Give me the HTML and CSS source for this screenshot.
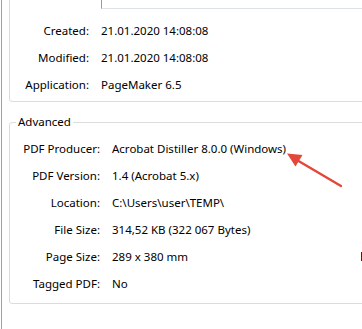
FILE: index.html
```html
<!DOCTYPE html>
<html lang="en">
<head>
<meta charset="utf-8">
<title>Document Properties</title>
<link rel="stylesheet" href="styles.css">
</head>
<body>
<div class="window">
  <div class="panel">
    <section class="group group-top">
      <div class="field-input"></div>
      <div class="props props-top">
        <span class="label">Created:</span><span class="value">21.01.2020 14:08:08</span>
        <span class="label">Modified:</span><span class="value">21.01.2020 14:08:08</span>
        <span class="label">Application:</span><span class="value">PageMaker 6.5</span>
      </div>
    </section>
    <fieldset class="group group-adv">
      <legend class="legend">Advanced</legend>
      <div class="props props-adv">
        <span class="label">PDF Producer:</span><span class="value">Acrobat Distiller 8.0.0 (Windows)</span>
        <span class="label">PDF Version:</span><span class="value">1.4 (Acrobat 5.x)</span>
        <span class="label">Location:</span><span class="value">C:\Users\user\TEMP\</span>
        <span class="label">File Size:</span><span class="value">314,52 KB (322 067 Bytes)</span>
        <span class="label">Page Size:</span><span class="value">289 x 380 mm</span>
        <span class="label">Tagged PDF:</span><span class="value">No</span>
      </div>
    </fieldset>
  </div>
  <span class="edge-mark"></span>
  <svg class="arrow" width="362" height="329" viewBox="0 0 362 329">
    <line x1="341" y1="186" x2="296" y2="159.5" stroke="#e5463a" stroke-width="2.4" stroke-linecap="round"/>
    <polygon points="287,153.5 302.5,155 295.5,166.5" fill="#e5463a"/>
  </svg>
</div>
</body>
</html>
```

FILE: styles.css
```css
html, body {
  margin: 0;
  padding: 0;
  background: #ffffff;
}

body {
  width: 362px;
  height: 329px;
  overflow: hidden;
  font-family: "Noto Sans", "Open Sans", sans-serif;
  font-size: 11.5px;
  color: #000000;
}

.window {
  position: relative;
  height: 329px;
  margin-left: 1px;
  border-left: 1px solid #a0a0a0;
  overflow: hidden;
}

.panel {
  padding-left: 7px;
  margin-right: -20px;
}

.group {
  border: 1px solid #dcdcdc;
  border-radius: 3px;
}

.group-top {
  margin: -12px 0 0 0;
  padding: 0 0 3px 0;
}

.field-input {
  height: 19px;
  margin-left: 91px;
  border-left: 1px solid #9a9a9a;
  border-bottom: 1px solid #dde2e8;
}

.props {
  display: grid;
  grid-auto-rows: 27px;
  column-gap: 12px;
  align-items: center;
  white-space: nowrap;
}

.props-top {
  margin-top: 8px;
  grid-template-columns: 79px 1fr;
}

.props-adv {
  grid-template-columns: 90px 1fr;
}

.label {
  text-align: right;
}

.group-adv {
  margin: 12px 0 0 0;
  padding: 5px 0 6px 0;
  min-width: 0;
}

.legend {
  margin-left: 6px;
  padding: 0 2px;
  line-height: 16px;
}

.edge-mark {
  position: absolute;
  right: 0;
  top: 252px;
  width: 1px;
  height: 9px;
  background: #6b1010;
}

.arrow {
  position: absolute;
  left: -2px;
  top: 0;
  pointer-events: none;
}
```
